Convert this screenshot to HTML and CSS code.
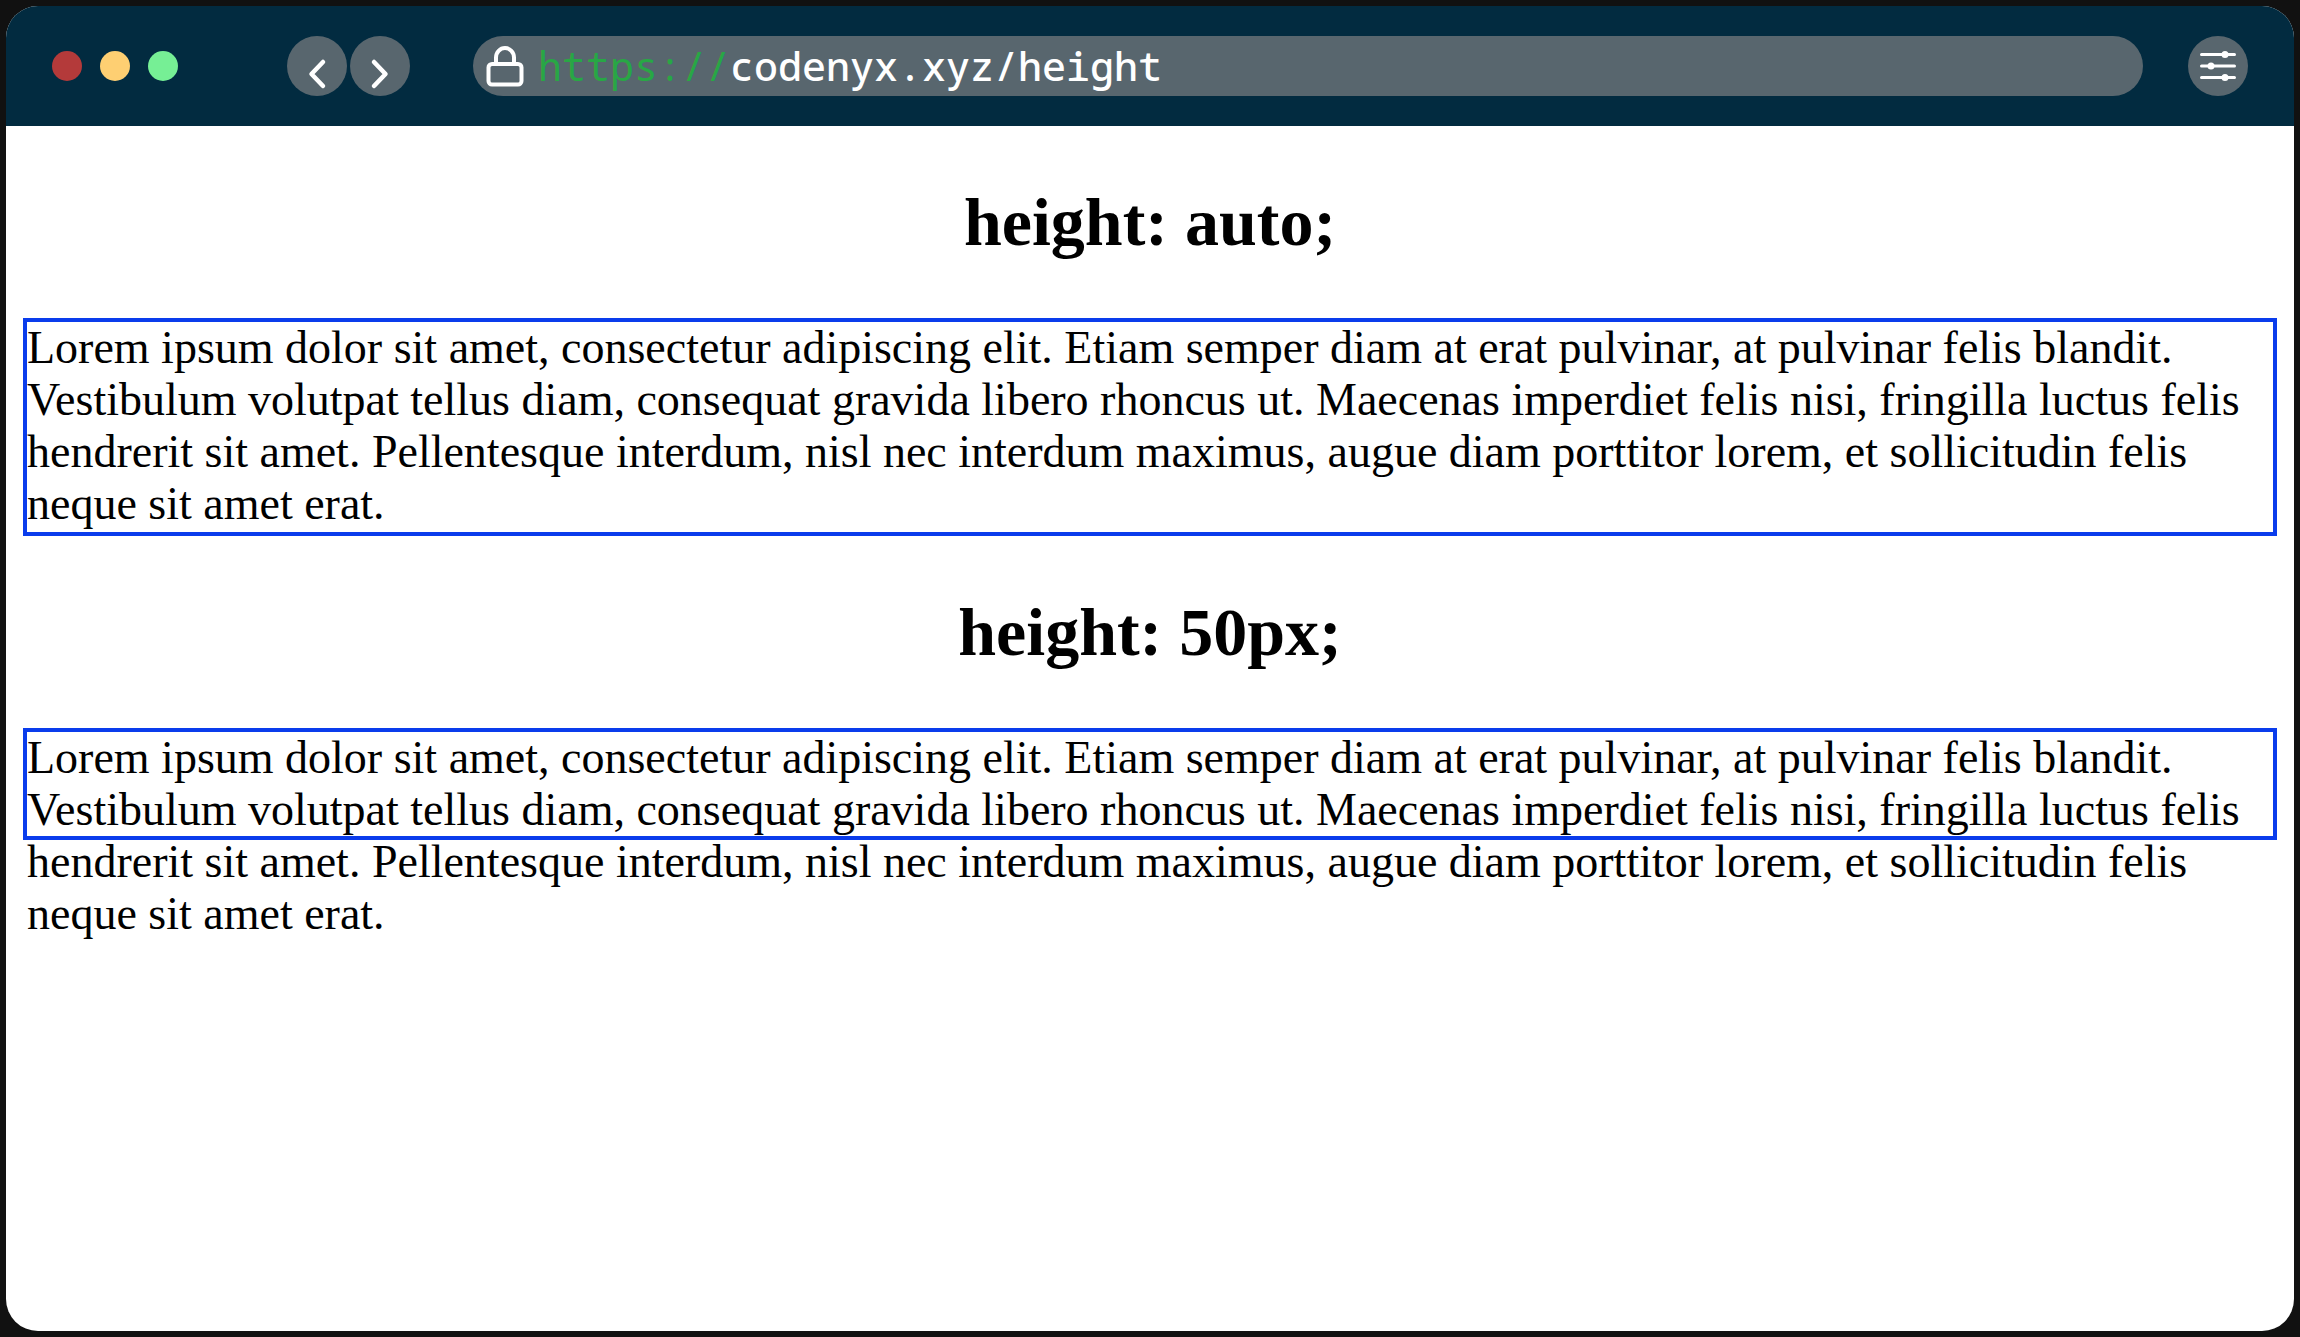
FILE: index.html
```html
<!DOCTYPE html>
<html lang="en">
<head>
<meta charset="utf-8">
<meta name="viewport" content="width=device-width, initial-scale=1">
<title>height</title>
<link rel="stylesheet" href="styles.css">
</head>
<body>
<div class="window">
  <header class="toolbar">
    <div class="lights">
      <span class="light light-red"></span>
      <span class="light light-yellow"></span>
      <span class="light light-green"></span>
    </div>
    <nav class="history" aria-label="History">
      <button class="round" type="button" aria-label="Back">
        <svg width="60" height="60" viewBox="0 0 60 60" fill="none" stroke="#fff" stroke-width="4.5" stroke-linecap="round" stroke-linejoin="round"><path d="M36 26 24.500 38 36 50"/></svg>
      </button>
      <button class="round" type="button" aria-label="Forward">
        <svg width="60" height="60" viewBox="0 0 60 60" fill="none" stroke="#fff" stroke-width="4.5" stroke-linecap="round" stroke-linejoin="round"><path d="M24 26 35.500 38 24 50"/></svg>
      </button>
    </nav>
    <div class="address">
      <svg class="lock" width="38" height="42" viewBox="0 0 38 42" fill="none" stroke="#fff" stroke-width="4"><rect x="2.500" y="19" width="33" height="20.500" rx="3.500"/><path d="M10 19V12.500a9 9.500 0 0 1 18 0V19"/></svg>
      <a class="url" href="https://codenyx.xyz/height"><span class="scheme">https://</span>codenyx.xyz/height</a>
    </div>
    <button class="round" type="button" aria-label="Settings">
      <svg width="60" height="60" viewBox="0 0 60 60" fill="#fff" stroke="#fff" stroke-width="3" stroke-linecap="round"><path d="M13.500 18.500h33M13.500 30h33M13.500 41.500h33"/><g stroke="none"><circle cx="37" cy="18.500" r="3.500"/><circle cx="23" cy="30" r="3.500"/><circle cx="37" cy="41.500" r="3.500"/></g></svg>
    </button>
  </header>
  <main class="page">
    <h2 class="title">height: auto;</h2>
    <p class="box">Lorem ipsum dolor sit amet, consectetur adipiscing elit. Etiam semper diam at erat pulvinar, at pulvinar felis blandit. Vestibulum volutpat tellus diam, consequat gravida libero rhoncus ut. Maecenas imperdiet felis nisi, fringilla luctus felis hendrerit sit amet. Pellentesque interdum, nisl nec interdum maximus, augue diam porttitor lorem, et sollicitudin felis neque sit amet erat.</p>
    <h2 class="title">height: 50px;</h2>
    <p class="box box-fixed">Lorem ipsum dolor sit amet, consectetur adipiscing elit. Etiam semper diam at erat pulvinar, at pulvinar felis blandit. Vestibulum volutpat tellus diam, consequat gravida libero rhoncus ut. Maecenas imperdiet felis nisi, fringilla luctus felis hendrerit sit amet. Pellentesque interdum, nisl nec interdum maximus, augue diam porttitor lorem, et sollicitudin felis neque sit amet erat.</p>
  </main>
</div>
</body>
</html>
```
FILE: styles.css
```css
* {
  box-sizing: border-box;
}

body {
  display: flex;
  min-height: 100vh;
  margin: 0;
  padding: 6px;
  background: #111;
}

.window {
  display: flex;
  flex: 1;
  flex-direction: column;
  min-width: 0;
  overflow: hidden;
  border-radius: 32px;
  background: #fff;
}

.toolbar {
  display: flex;
  align-items: center;
  padding: 30px 46px;
  background: #022b40;
}

.lights {
  display: flex;
  gap: 18px;
}

.light {
  width: 30px;
  height: 30px;
  border-radius: 50%;
}

.light-red {
  background: #b43a3a;
}

.light-yellow {
  background: #fecf72;
}

.light-green {
  background: #76ef95;
}

.history {
  display: flex;
  gap: 3px;
  margin: 0 63px 0 109px;
}

.round {
  flex: none;
  width: 60px;
  height: 60px;
  padding: 0;
  border: 0;
  border-radius: 50%;
  background: #58666e;
}

.round svg {
  display: block;
}

.address {
  display: flex;
  flex: 1;
  align-items: center;
  gap: 14px;
  height: 60px;
  min-width: 0;
  margin-right: 45px;
  padding: 0 13px;
  border-radius: 30px;
  background: #58666e;
}

.lock {
  flex: none;
}

.url {
  color: #fff;
  font: 500 40px/60px "Noto Sans Mono", "DejaVu Sans Mono", monospace;
  text-decoration: none;
  white-space: nowrap;
}

.scheme {
  color: #28a745;
  font-weight: 400;
}

.page {
  display: flow-root;
  padding: 0 17px;
  color: #000;
  font-family: "Liberation Serif", "Times New Roman", serif;
}

.title {
  margin: 56px 0;
  font-size: 68px;
  line-height: 80px;
  text-align: center;
}

.box {
  margin: 0;
  padding-bottom: 2px;
  border: 4px solid #0a3cec;
  font-size: 46px;
  line-height: 52px;
}

.box-fixed {
  height: 112px;
}
```
